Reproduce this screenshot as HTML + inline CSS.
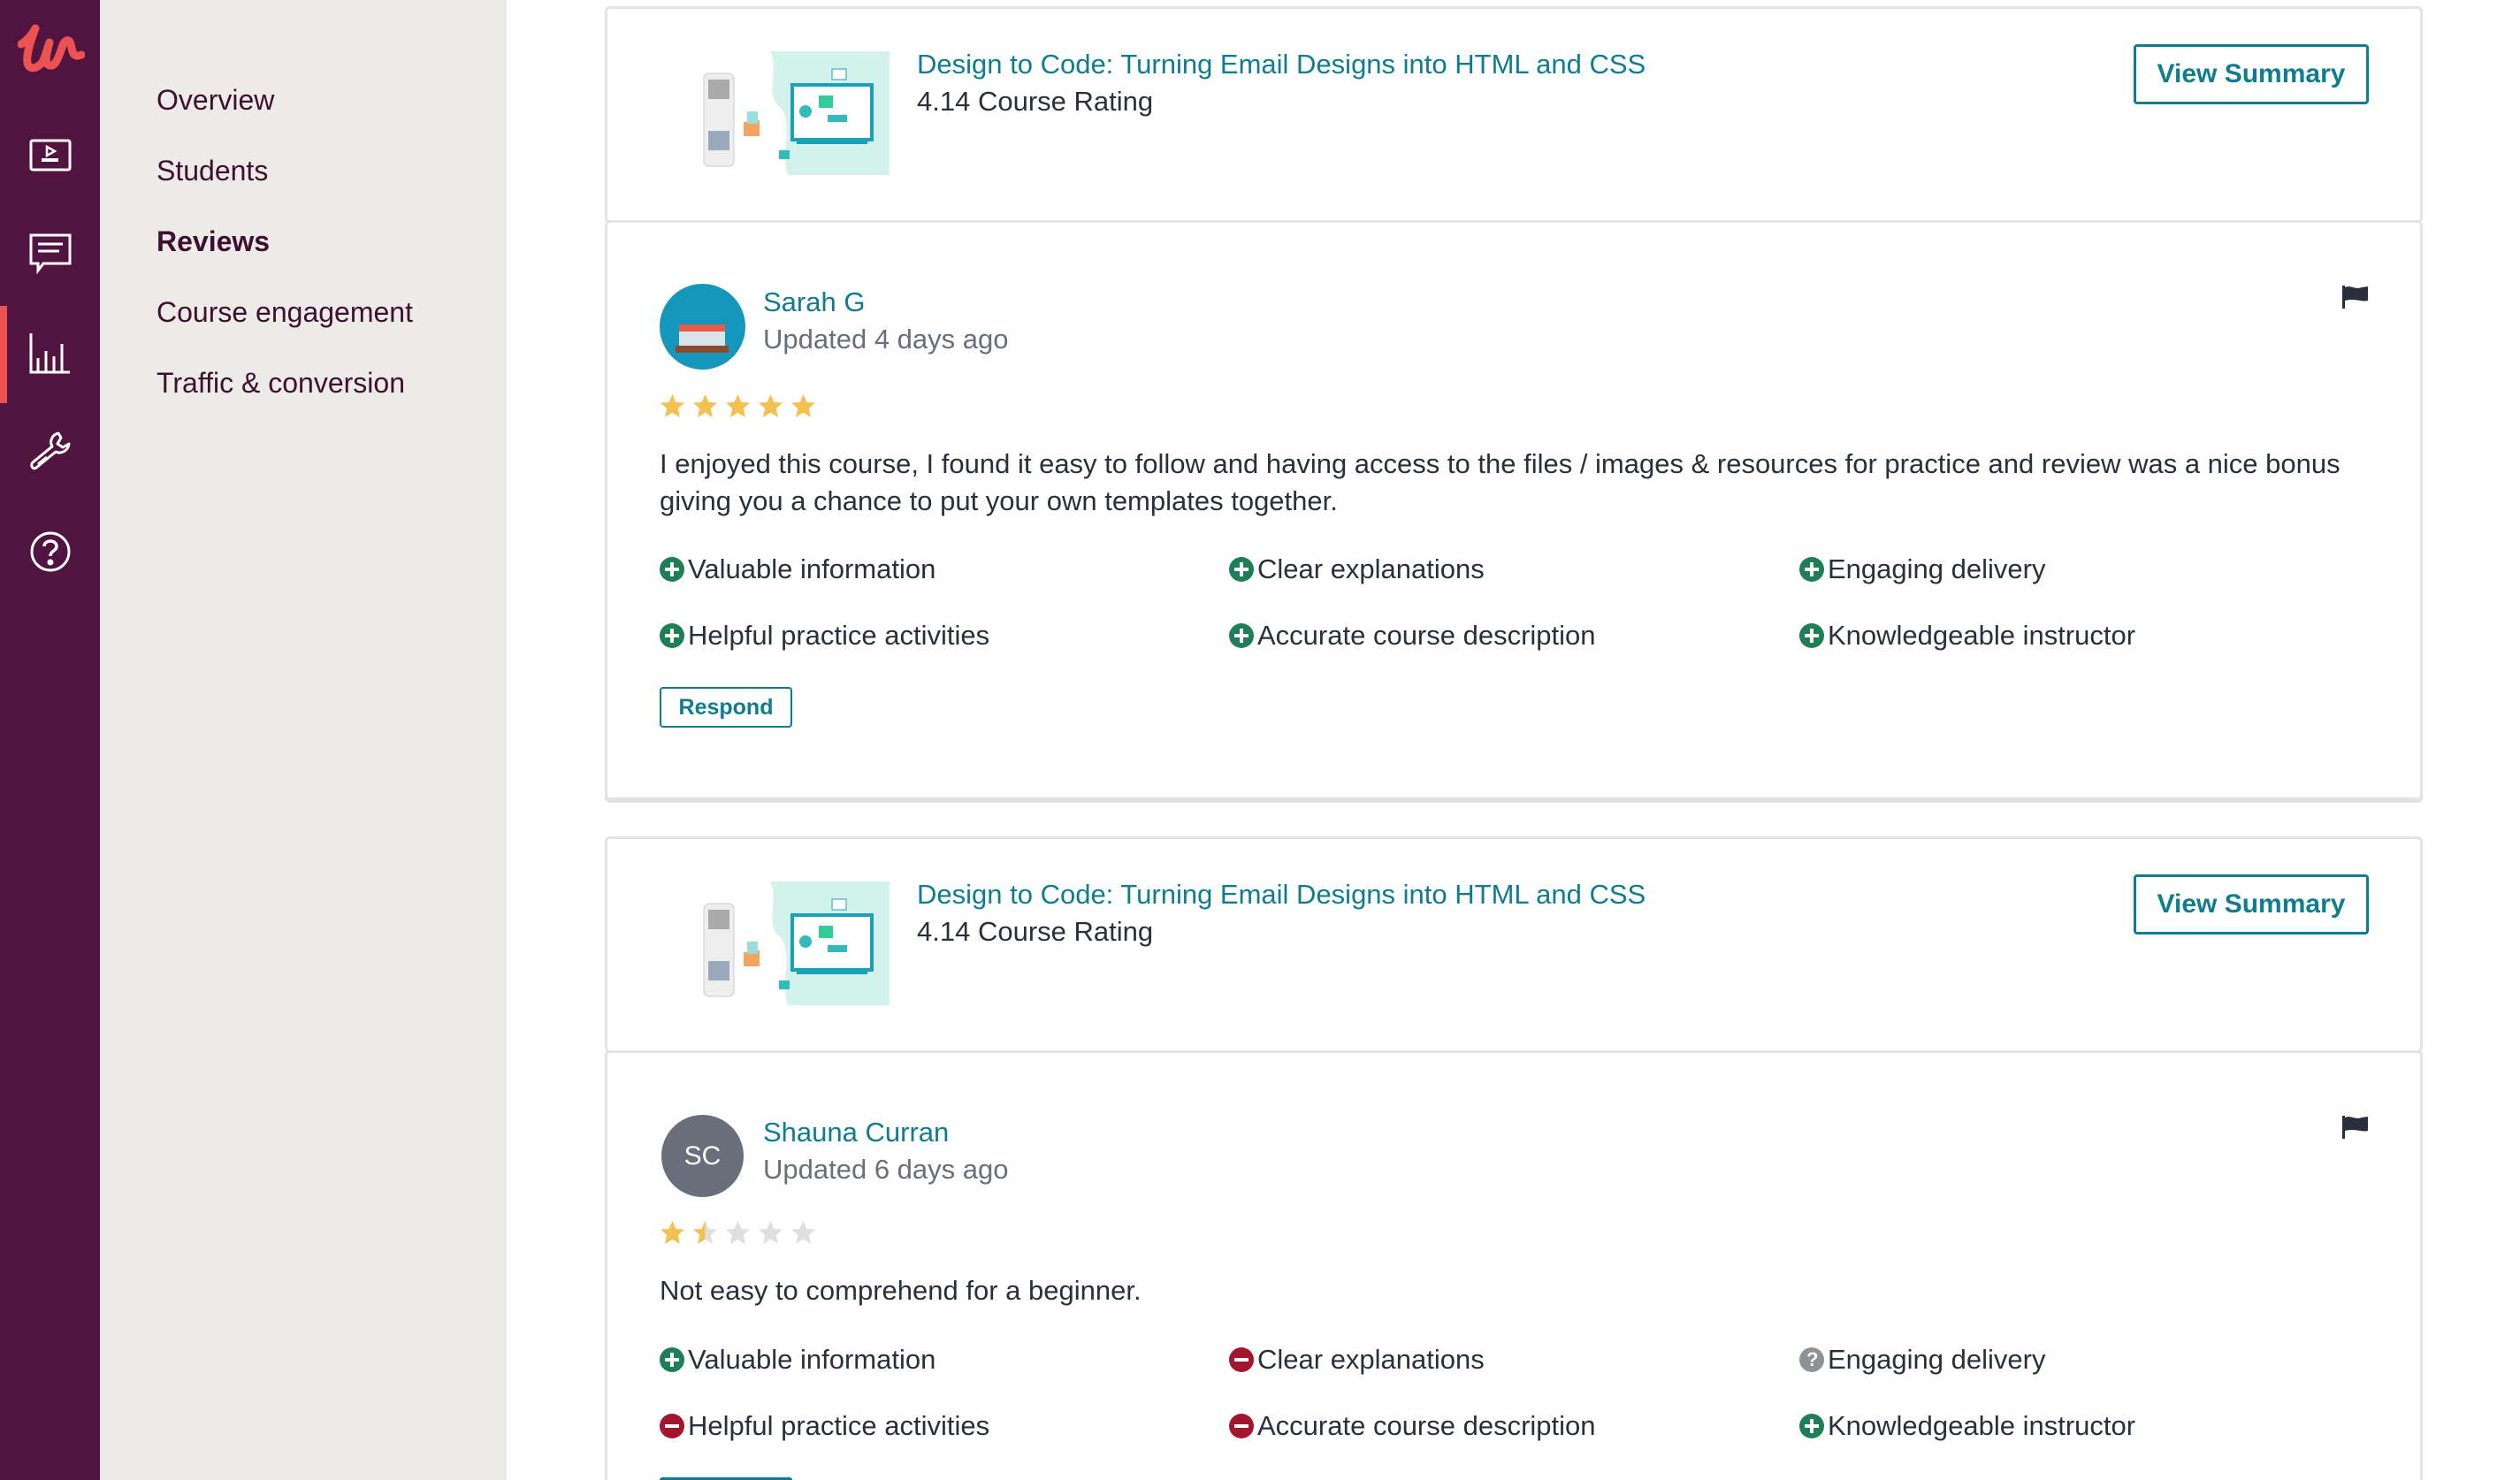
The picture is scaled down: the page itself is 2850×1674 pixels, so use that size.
<!DOCTYPE html>
<html style="width:2850px;height:1674px;overflow:hidden"><head><meta charset="utf-8">
<style>
*{margin:0;padding:0;box-sizing:border-box}
body{width:2850px;height:1674px;overflow:hidden;background:#fff;font-family:"Liberation Sans",sans-serif;color:#29303b;position:relative}
.wrap{position:absolute;left:0;top:0;width:2850px;height:1674px;overflow:hidden}
.a{position:absolute;white-space:nowrap}
.side{left:0;top:0;width:113px;height:1674px;background:#511440}
.panel{left:113px;top:0;width:460px;height:1674px;background:#edebe7}
.nav{left:177px;font-size:32px;color:#3d0f30;line-height:40px}
.card{left:684px;width:2056px;border:3px solid #e4e4e4;border-radius:6px;background:#fff}
.link{color:#0f7c90}
.t30{font-size:31px;line-height:40px}
.btn{border:3px solid #0f7c90;border-radius:4px;color:#0f7c90;font-weight:bold;display:flex;align-items:center;justify-content:center}
.tag{font-size:31px;line-height:40px;display:flex;align-items:center}
.ic{width:28px;height:28px;border-radius:50%;display:inline-block;position:relative;margin-right:4px}
.g{background:#1e7e55}.r{background:#a3172e}.q{background:#8e9196}
.g:before,.g:after,.r:before{content:"";position:absolute;background:#fff}
.g:before,.r:before{left:6px;top:12px;width:16px;height:4px}
.g:after{left:12px;top:6px;width:4px;height:16px}
.q:before{content:"?";position:absolute;color:#fff;font-weight:bold;font-size:22px;left:8px;top:1px;line-height:26px}
</style></head><body><div class="wrap">
<div class="a side"></div>
<div class="a panel"></div>
<div class="a" style="left:0;top:346px;width:8px;height:110px;background:#ec5252"></div>
<svg class="a" style="left:20px;top:26px" width="76" height="56" viewBox="0 0 76 56"><path d="M4 24 C10 20 16 14 20 6 C14 22 8 40 12 48 C16 54 26 50 30 40 L36 22 C32 36 30 46 36 48 C42 50 46 40 50 28 C52 20 58 16 60 24 C62 32 62 40 72 36" fill="none" stroke="#ec5252" stroke-width="9" stroke-linecap="round" stroke-linejoin="round"/></svg>
<svg class="a" style="left:33px;top:152px" width="48" height="48" viewBox="0 0 48 48" fill="none" stroke="#fff" stroke-width="3"><rect x="2" y="7" width="44" height="33" rx="2"/><path d="M20 14 L29 19 L20 24 Z" stroke-width="2.5"/><path d="M14 29 H33" stroke-width="4"/></svg>
<svg class="a" style="left:33px;top:262px" width="48" height="48" viewBox="0 0 48 48" fill="none" stroke="#fff" stroke-width="3"><path d="M2 4 H46 V36 H16 L10 44 V36 H2 Z"/><path d="M10 14 H38 M10 22 H34" stroke-width="3"/></svg>
<svg class="a" style="left:33px;top:375px" width="48" height="48" viewBox="0 0 48 48" fill="none" stroke="#fff" stroke-width="3"><path d="M2 2 V46 H46"/><path d="M10 46 V30 M19 46 V22 M28 46 V28 M37 46 V14"/></svg>
<svg class="a" style="left:33px;top:487px" width="48" height="48" viewBox="0 0 48 48" fill="none" stroke="#fff" stroke-width="3" stroke-linejoin="round"><path d="M33 3 C25 5 23 13 26 18 L4 36 C1 39 4 45 8 42 L30 24 C36 27 44 23 45 15 L38 19 L32 15 L36 8 Z"/><path d="M10 38 L20 30"/></svg>
<svg class="a" style="left:33px;top:600px" width="48" height="48" viewBox="0 0 48 48" fill="none" stroke="#fff" stroke-width="3"><circle cx="24" cy="24" r="21"/><path d="M17 18 C17 10 31 10 31 18 C31 23 24 23 24 29" stroke-width="3.5"/><circle cx="24" cy="36" r="2" fill="#fff"/></svg>

<div class="a nav" style="top:93px">Overview</div>
<div class="a nav" style="top:173px">Students</div>
<div class="a nav" style="top:253px;font-weight:bold">Reviews</div>
<div class="a nav" style="top:333px">Course engagement</div>
<div class="a nav" style="top:413px">Traffic &amp; conversion</div>

<svg width="0" height="0" style="position:absolute"><defs>
<g id="thumb"><rect width="245" height="140" fill="#fff"/><path d="M110 0 H245 V140 H130 C120 110 140 80 118 60 C105 45 120 20 110 0Z" fill="#d4f2ec"/><rect x="35" y="25" width="34" height="105" rx="6" fill="#eee" stroke="#ccc"/><rect x="40" y="32" width="24" height="22" fill="#aaa"/><rect x="40" y="90" width="24" height="22" fill="#9ab"/><rect x="135" y="38" width="90" height="62" fill="#fff" stroke="#1aa0b8" stroke-width="4"/><rect x="140" y="100" width="80" height="5" fill="#1aa0b8"/><circle cx="150" cy="68" r="7" fill="#3bb"/><rect x="165" y="50" width="16" height="14" fill="#3c9"/><rect x="175" y="72" width="22" height="8" fill="#3bb"/><path d="M80 80 L98 78 L98 96 L80 96Z" fill="#f5a45d"/><rect x="84" y="68" width="12" height="14" fill="#9dd"/><rect x="180" y="20" width="16" height="12" fill="#fff" stroke="#1aa0b8"/><rect x="120" y="112" width="12" height="10" fill="#3bb"/></g>
<path id="star" d="M14.5 1 L18.5 10 L28 10.5 L20.8 17 L23 27 L14.5 21.8 L6 27 L8.2 17 L1 10.5 L10.5 10 Z"/>
<linearGradient id="half" x1="0" x2="1" y1="0" y2="0"><stop offset="0.5" stop-color="#f4c150"/><stop offset="0.5" stop-color="#dedfe0"/></linearGradient>
</defs></svg>

<div class="a card" style="top:7px;height:245px"></div>
<svg class="a" style="left:761px;top:58px" width="245" height="140"><use href="#thumb"/></svg>
<div class="a t30 link" style="left:1037px;top:53px">Design to Code: Turning Email Designs into HTML and CSS</div>
<div class="a t30" style="left:1037px;top:95px">4.14 Course Rating</div>
<div class="a btn" style="left:2413px;top:50px;width:266px;height:68px;font-size:30px">View Summary</div>

<div class="a card" style="top:249px;height:656px;box-shadow:0 3px 0 #e0e0e0"></div>
<svg class="a" style="left:2649px;top:322px" width="30" height="28" viewBox="0 0 30 28"><rect x="0" y="1" width="3" height="26" fill="#29303b"/><path d="M3 3 C10 0 14 6 22 3 L29 2 V18 C22 20 15 15 3 18 Z" fill="#29303b"/></svg>
<div class="a" style="left:746px;top:321px;width:97px;height:97px;border-radius:50%;background:#1597bd;overflow:hidden"><div style="position:absolute;left:22px;top:46px;width:52px;height:26px;background:#d9e4ea;border-top:8px solid #e65a4c"></div><div style="position:absolute;left:18px;top:70px;width:60px;height:8px;background:#8a4a2c"></div></div>
<div class="a t30 link" style="left:863px;top:322px">Sarah G</div>
<div class="a t30" style="left:863px;top:364px;color:#686f7a">Updated 4 days ago</div>
<svg class="a" style="left:746px;top:445px" width="180" height="30" fill="#f4c150"><use href="#star"/><use href="#star" x="37"/><use href="#star" x="74"/><use href="#star" x="111"/><use href="#star" x="148"/></svg>
<div class="a t30" style="left:746px;top:504px;line-height:42px;white-space:normal;width:1930px">I enjoyed this course, I found it easy to follow and having access to the files / images &amp; resources for practice and review was a nice bonus giving you a chance to put your own templates together.</div>
<div class="a tag" style="left:746px;top:624px"><span class="ic g"></span>Valuable information</div>
<div class="a tag" style="left:1390px;top:624px"><span class="ic g"></span>Clear explanations</div>
<div class="a tag" style="left:2035px;top:624px"><span class="ic g"></span>Engaging delivery</div>
<div class="a tag" style="left:746px;top:699px"><span class="ic g"></span>Helpful practice activities</div>
<div class="a tag" style="left:1390px;top:699px"><span class="ic g"></span>Accurate course description</div>
<div class="a tag" style="left:2035px;top:699px"><span class="ic g"></span>Knowledgeable instructor</div>
<div class="a btn" style="left:746px;top:777px;width:150px;height:46px;font-size:25px;border-width:2px">Respond</div>

<div class="a card" style="top:946px;height:245px"></div>
<svg class="a" style="left:761px;top:997px" width="245" height="140"><use href="#thumb"/></svg>
<div class="a t30 link" style="left:1037px;top:992px">Design to Code: Turning Email Designs into HTML and CSS</div>
<div class="a t30" style="left:1037px;top:1034px">4.14 Course Rating</div>
<div class="a btn" style="left:2413px;top:989px;width:266px;height:68px;font-size:30px">View Summary</div>

<div class="a card" style="top:1188px;height:486px;border-bottom:none;border-radius:6px 6px 0 0"></div>
<svg class="a" style="left:2649px;top:1261px" width="30" height="28" viewBox="0 0 30 28"><rect x="0" y="1" width="3" height="26" fill="#29303b"/><path d="M3 3 C10 0 14 6 22 3 L29 2 V18 C22 20 15 15 3 18 Z" fill="#29303b"/></svg>
<div class="a" style="left:748px;top:1261px;width:93px;height:93px;border-radius:50%;background:#686f7a;color:#fff;font-size:30px;display:flex;align-items:center;justify-content:center">SC</div>
<div class="a t30 link" style="left:863px;top:1261px">Shauna Curran</div>
<div class="a t30" style="left:863px;top:1303px;color:#686f7a">Updated 6 days ago</div>
<svg class="a" style="left:746px;top:1380px" width="180" height="30"><use href="#star" fill="#f4c150"/><use href="#star" x="37" fill="url(#half)"/><use href="#star" x="74" fill="#dedfe0"/><use href="#star" x="111" fill="#dedfe0"/><use href="#star" x="148" fill="#dedfe0"/></svg>
<div class="a t30" style="left:746px;top:1440px">Not easy to comprehend for a beginner.</div>
<div class="a tag" style="left:746px;top:1518px"><span class="ic g"></span>Valuable information</div>
<div class="a tag" style="left:1390px;top:1518px"><span class="ic r"></span>Clear explanations</div>
<div class="a tag" style="left:2035px;top:1518px"><span class="ic q"></span>Engaging delivery</div>
<div class="a tag" style="left:746px;top:1593px"><span class="ic r"></span>Helpful practice activities</div>
<div class="a tag" style="left:1390px;top:1593px"><span class="ic r"></span>Accurate course description</div>
<div class="a tag" style="left:2035px;top:1593px"><span class="ic g"></span>Knowledgeable instructor</div>
<div class="a" style="left:746px;top:1671px;width:150px;height:3px;background:#0f7c90;border-radius:4px 4px 0 0"></div>
</div></body></html>
